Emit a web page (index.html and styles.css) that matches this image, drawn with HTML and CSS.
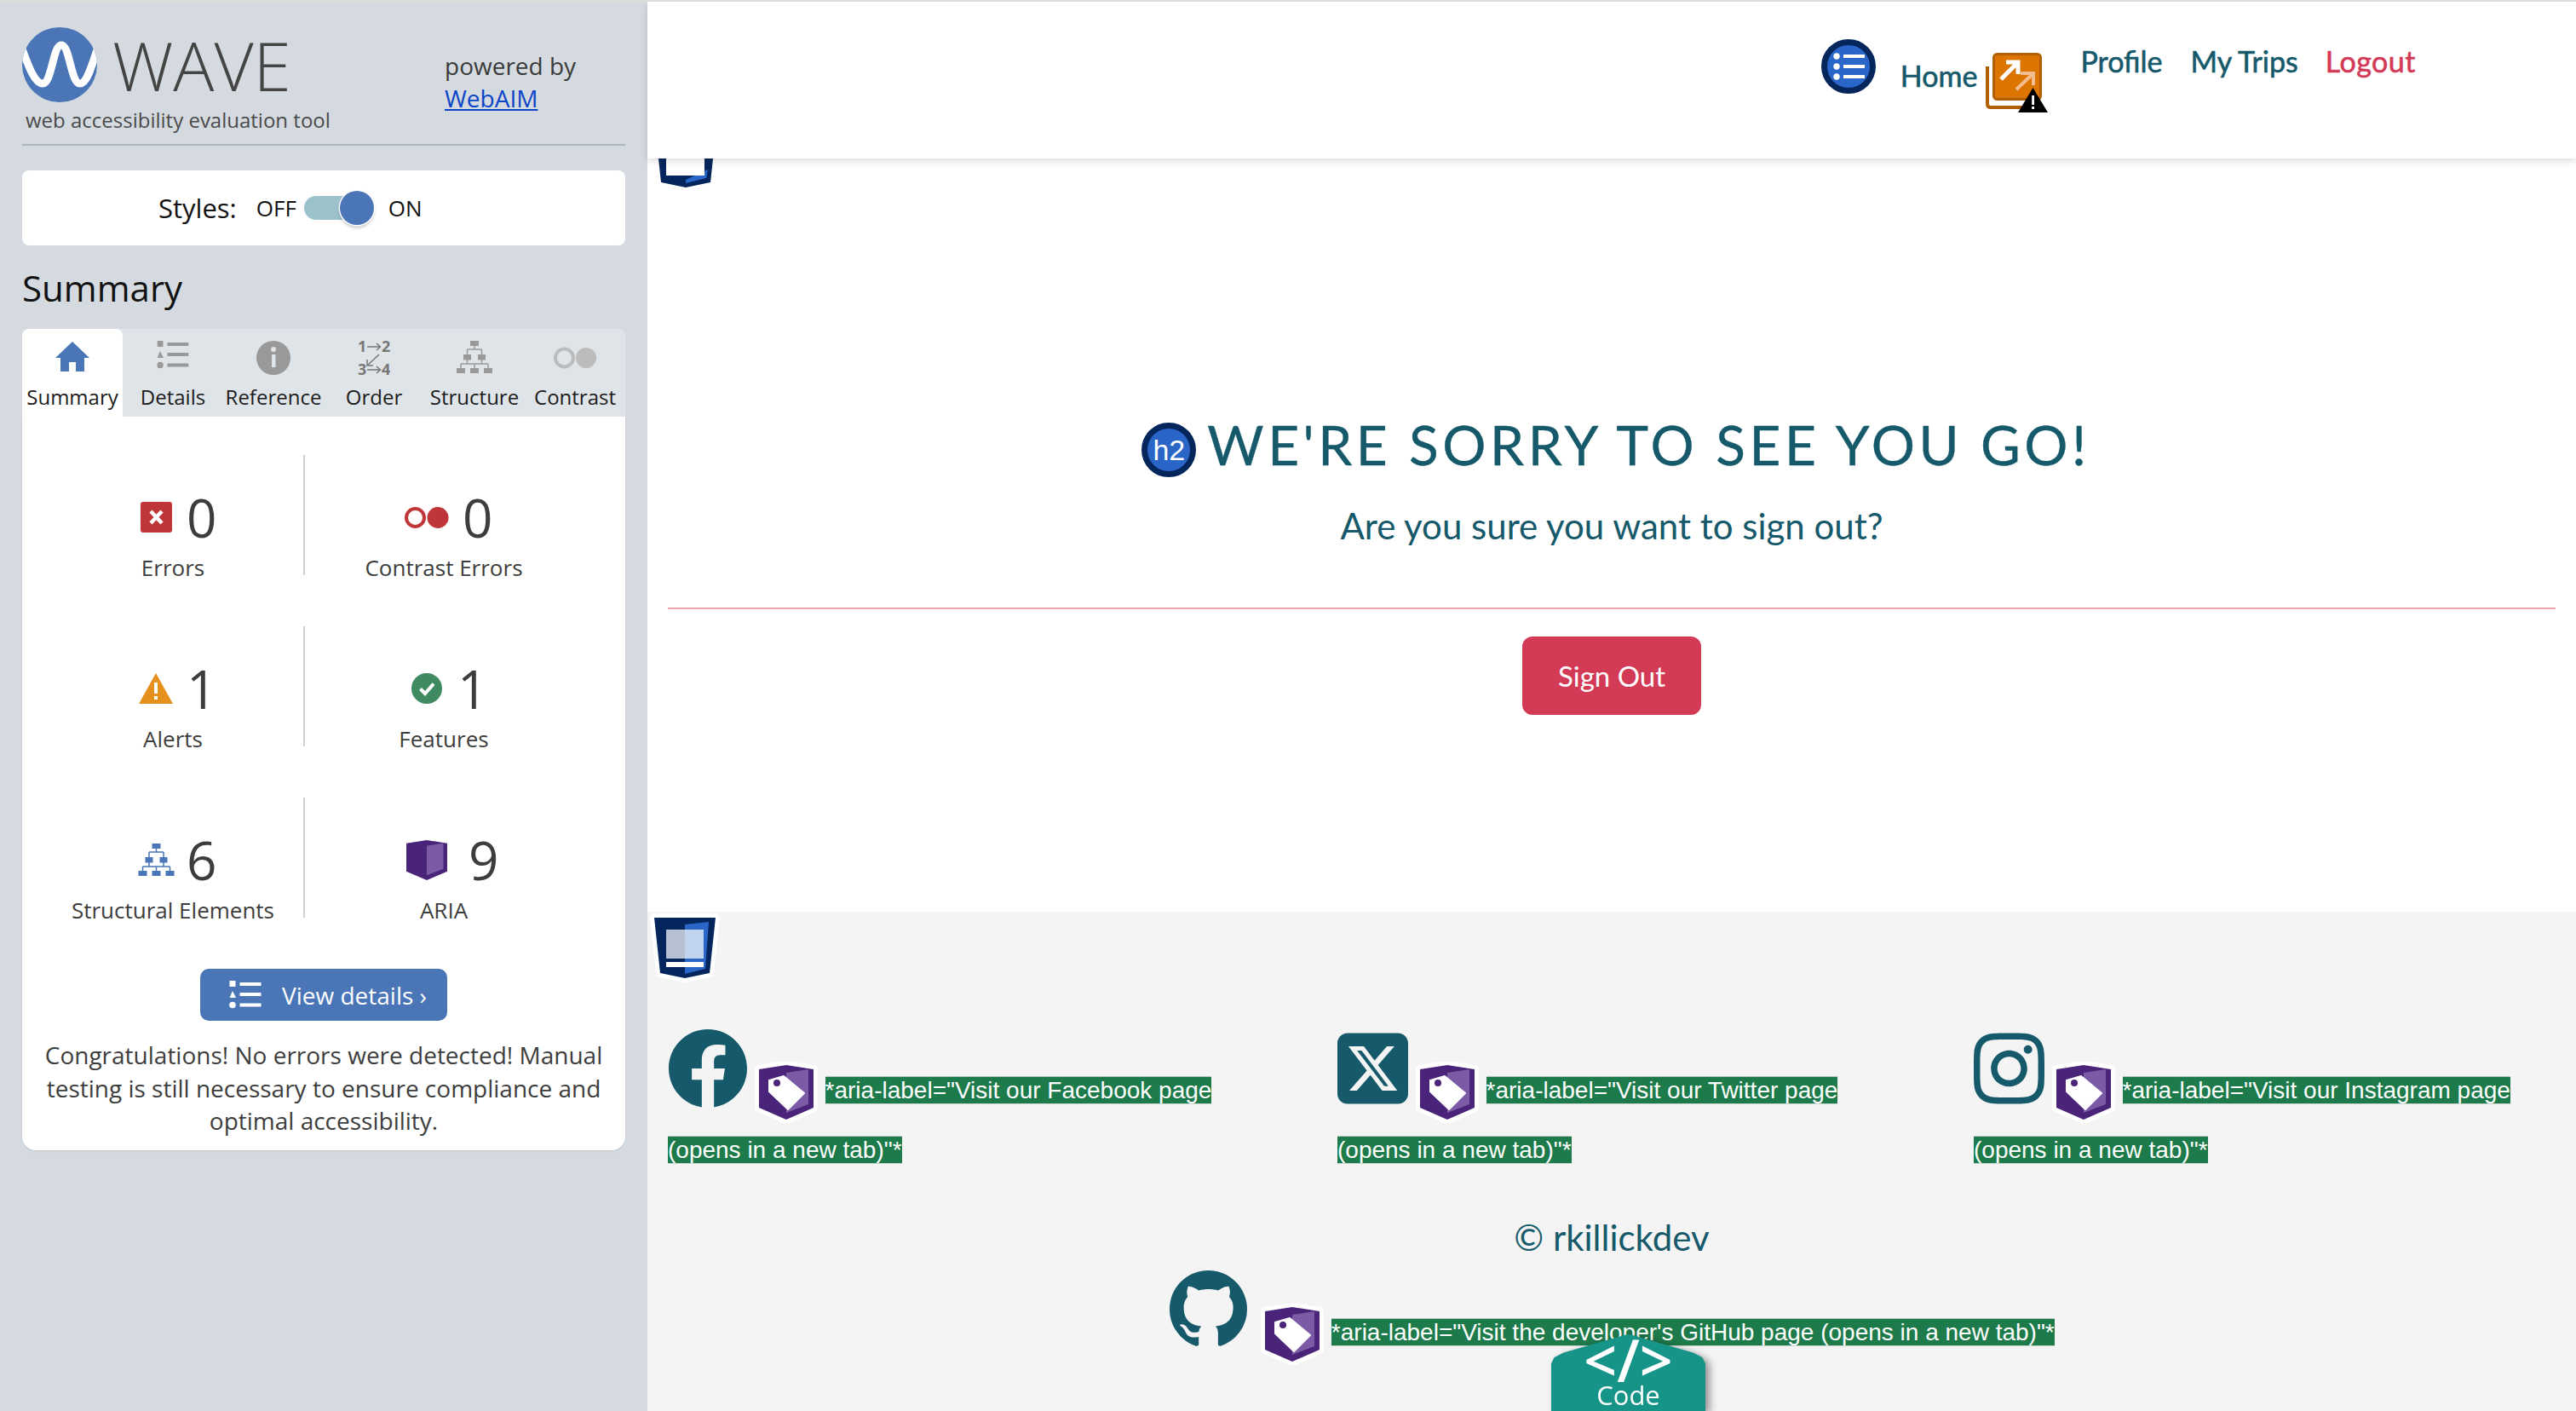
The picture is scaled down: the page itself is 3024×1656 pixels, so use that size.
FILE: index.html
```html
<!DOCTYPE html>
<html lang="en">
<head>
<meta charset="utf-8">
<title>Sign out</title>
<link rel="stylesheet" href="styles.css">
</head>
<body>
<svg class="defs" width="0" height="0" aria-hidden="true">
  <symbol id="s-aria" viewBox="0 0 64 64">
    <polygon points="0,5 32,0 64,5 64,50 32,64 0,50" fill="#4a2478"/>
    <polygon points="32,9 58,5 58,46 32,56" fill="#7b5aa6"/>
  </symbol>
  <symbol id="s-tag" viewBox="-6 -4 76 72">
    <polygon points="0,5 32,0 64,5 64,50 32,64 0,50" fill="#4a2478" stroke="#fff" stroke-width="10" stroke-linejoin="round"/>
    <polygon points="0,5 32,0 64,5 64,50 32,64 0,50" fill="#4a2478"/>
    <polygon points="32,9 58,5 58,46 32,56" fill="#7b5aa6"/>
    <path d="M12 18 L29 13 L53 33 L34 52 L12 31Z" fill="#fff" stroke="#fff" stroke-width="2" stroke-linejoin="round"/>
    <circle cx="21" cy="21" r="4" fill="#4a2478"/>
  </symbol>
  <symbol id="s-tree" viewBox="0 0 42 38">
    <path d="M21 6V10M12.5 10H29.5M12.5 10V16M29.5 10V16M12.5 22V27M29.5 22V27M5 27H37M5 27V32M21 27V32M37 27V32" stroke="currentColor" stroke-width="1.5" fill="none"/>
    <rect x="16" y="0" width="10" height="6" fill="currentColor"/>
    <rect x="8" y="16" width="9" height="6.5" fill="currentColor"/>
    <rect x="25" y="16" width="9" height="6.5" fill="currentColor"/>
    <rect x="0" y="32" width="10" height="6" fill="currentColor"/>
    <rect x="16" y="32" width="10" height="6" fill="currentColor"/>
    <rect x="32" y="32" width="10" height="6" fill="currentColor"/>
  </symbol>
  <symbol id="s-list" viewBox="0 0 37 33">
    <rect x="0" y="0" width="7" height="7" fill="currentColor"/>
    <polygon points="3.5,12 7.5,20 0,20" fill="currentColor"/>
    <circle cx="3.5" cy="28.500" r="3.800" fill="currentColor"/>
    <rect x="12" y="2" width="25" height="4" fill="currentColor"/>
    <rect x="12" y="14" width="25" height="4" fill="currentColor"/>
    <rect x="12" y="26.500" width="25" height="4" fill="currentColor"/>
  </symbol>
</svg>

<aside class="sidebar">
  <header class="brand">
    <div class="brand-main">
      <div class="brand-logo">
        <svg class="logo" viewBox="0 0 88 88" role="img" aria-label="WAVE logo">
          <defs><clipPath id="logo-clip"><circle cx="44" cy="44" r="44"/></clipPath></defs>
          <circle cx="44" cy="44" r="44" fill="#4a76b8"/>
          <path clip-path="url(#logo-clip)" d="M-2 20 C8 48 15 66 24 66 C35 66 36 21 46 21 C56 21 57 66 68 66 C76 66 81 48 90 20" fill="none" stroke="#fff" stroke-width="9"/>
        </svg>
        <span class="wave-word">WAVE</span>
      </div>
      <div class="tagline">web accessibility evaluation tool</div>
    </div>
    <div class="powered">powered by<br><a href="#">WebAIM</a></div>
  </header>

  <div class="styles-card">
    <span class="styles-label">Styles:</span>
    <span class="styles-state">OFF</span>
    <span class="toggle"><span class="knob"></span></span>
    <span class="styles-state">ON</span>
  </div>

  <h1 class="summary-title">Summary</h1>

  <nav class="tabs">
    <div class="tab tab-active">
      <svg class="tab-icon" viewBox="0 0 40 40"><path d="M20 1 L40 20 H34 V36 H24 V25 H16 V36 H6 V20 H0Z" fill="#4a76b8"/></svg>
      <span>Summary</span>
    </div>
    <div class="tab">
      <svg class="tab-icon tab-grey" viewBox="0 0 37 40"><use href="#s-list" x="0" y="0" width="37" height="33"/></svg>
      <span>Details</span>
    </div>
    <div class="tab">
      <svg class="tab-icon" viewBox="0 0 40 40"><circle cx="20" cy="20" r="20" fill="#999"/><circle cx="20" cy="10" r="3" fill="#dfe4e8"/><rect x="18" y="16" width="4.500" height="15" fill="#dfe4e8"/></svg>
      <span>Reference</span>
    </div>
    <div class="tab">
      <svg class="tab-order" viewBox="0 -6 38 52">
        <text x="0" y="13" class="order-digit">1</text><text x="28" y="13" class="order-digit">2</text>
        <text x="0" y="40" class="order-digit">3</text><text x="28" y="40" class="order-digit">4</text>
        <path d="M11 7H26M22 3L26.500 7L22 11M11 34H26M22 30L26.500 34L22 38M25 16L11 29M11 22V29H18" fill="none" stroke="#777" stroke-width="1.500"/>
      </svg>
      <span>Order</span>
    </div>
    <div class="tab">
      <svg class="tab-icon tab-grey" viewBox="0 0 42 40"><use href="#s-tree" x="0" y="0" width="42" height="38"/></svg>
      <span>Structure</span>
    </div>
    <div class="tab">
      <svg class="tab-icon tab-contrast" viewBox="0 0 50 26"><circle cx="12.500" cy="13" r="10.500" fill="none" stroke="#bcbcbc" stroke-width="4"/><circle cx="38" cy="13" r="12" fill="#bcbcbc"/></svg>
      <span>Contrast</span>
    </div>
  </nav>

  <section class="panel">
    <div class="stats">
      <div class="stat stat-left">
        <div class="stat-row">
          <span class="stat-icon"><svg width="37" height="36" viewBox="0 0 37 36"><rect width="37" height="36" rx="3" fill="#c03538"/><path d="M12 11L25 25M25 11L12 25" stroke="#fff" stroke-width="4.500"/></svg></span>
          <span class="stat-num">0</span>
        </div>
        <div class="stat-label">Errors</div>
      </div>
      <div class="stat stat-right">
        <div class="stat-row">
          <span class="stat-icon"><svg width="52" height="25" viewBox="0 0 52 25"><circle cx="12.500" cy="12.500" r="10.500" fill="none" stroke="#c03538" stroke-width="4"/><circle cx="39" cy="12.500" r="12.500" fill="#c03538"/></svg></span>
          <span class="stat-num">0</span>
        </div>
        <div class="stat-label">Contrast Errors</div>
      </div>
      <div class="stat stat-left">
        <div class="stat-row">
          <span class="stat-icon"><svg width="40" height="36" viewBox="0 0 40 36"><polygon points="20,0 40,36 0,36" fill="#e5901c"/><rect x="18" y="11" width="4" height="13" fill="#fff"/><rect x="18" y="27" width="4" height="4" fill="#fff"/></svg></span>
          <span class="stat-num">1</span>
        </div>
        <div class="stat-label">Alerts</div>
      </div>
      <div class="stat stat-right">
        <div class="stat-row stat-row-tight">
          <span class="stat-icon"><svg width="36" height="36" viewBox="0 0 36 36"><circle cx="18" cy="18" r="18" fill="#3f8a60"/><path d="M10.500 18.500L16 24L26 12.500" fill="none" stroke="#fff" stroke-width="4"/></svg></span>
          <span class="stat-num">1</span>
        </div>
        <div class="stat-label">Features</div>
      </div>
      <div class="stat stat-left">
        <div class="stat-row">
          <span class="stat-icon stat-tree"><svg width="43" height="38"><use href="#s-tree"/></svg></span>
          <span class="stat-num">6</span>
        </div>
        <div class="stat-label">Structural Elements</div>
      </div>
      <div class="stat stat-right">
        <div class="stat-row stat-row-wide">
          <span class="stat-icon"><svg width="48" height="47" viewBox="0 0 64 64" preserveAspectRatio="none"><use href="#s-aria"/></svg></span>
          <span class="stat-num">9</span>
        </div>
        <div class="stat-label">ARIA</div>
      </div>
    </div>

    <button class="details-btn" type="button">
      <svg class="details-icon" width="38" height="33"><use href="#s-list"/></svg>
      <span>View details ›</span>
    </button>

    <p class="congrats">Congratulations! No errors were detected! Manual testing is still necessary to ensure compliance and optimal accessibility.</p>
  </section>
</aside>

<main class="page">
  <header class="topbar">
    <nav class="nav">
      <svg class="ico-listcircle" width="64" height="64" viewBox="0 0 64 64">
        <circle cx="32" cy="32" r="28.500" fill="#2a66c8" stroke="#05265c" stroke-width="7"/>
        <circle cx="18" cy="20" r="3.700" fill="#fff"/><circle cx="18" cy="32" r="3.700" fill="#fff"/><circle cx="18" cy="44" r="3.700" fill="#fff"/>
        <rect x="26" y="18" width="25" height="4" fill="#fff"/><rect x="26" y="30" width="25" height="4" fill="#fff"/><rect x="26" y="42" width="25" height="4" fill="#fff"/>
      </svg>
      <a class="nav-link nav-home" href="#">Home</a>
      <svg class="ico-external" width="73" height="70" viewBox="0 0 73 70">
        <path d="M2 16V60Q2 64 6 64H45" fill="none" stroke="#b06000" stroke-width="4"/>
        <rect x="9.500" y="1.500" width="55" height="53" rx="4" fill="#dc7400" stroke="#b06000" stroke-width="3"/>
        <path d="M18 31L36 13M24 11H38V25" fill="none" stroke="#fff" stroke-width="5"/>
        <path d="M36 43L54 26M41 24H56V38" fill="none" stroke="#f5bd8f" stroke-width="4"/>
        <polygon points="38,70 55.500,41 73,70" fill="#000"/>
        <rect x="54.200" y="50" width="2.800" height="11" fill="#fff"/><rect x="54.200" y="63" width="2.800" height="3" fill="#fff"/>
      </svg>
      <a class="nav-link nav-profile" href="#">Profile</a>
      <a class="nav-link nav-trips" href="#">My Trips</a>
      <a class="nav-link nav-logout" href="#">Logout</a>
    </nav>
  </header>
  <svg class="ico-nav-landmark" width="72" height="71" viewBox="0 0 72 71">
    <polygon points="0,0 72,0 65,65 36,71 7,65" fill="#05265c"/>
    <polygon points="36,62 62,50 60,60 36,66" fill="#2a66c8"/>
    <rect x="13" y="0" width="45" height="57" fill="#fff"/>
  </svg>

  <section class="content">
    <h2 class="headline">
      <span class="h2-badge">h2</span>
      <span class="headline-text">WE'RE SORRY TO SEE YOU GO!</span>
    </h2>
    <p class="lead">Are you sure you want to sign out?</p>
    <hr class="rule">
    <div class="actions"><button class="signout" type="button">Sign Out</button></div>
  </section>

  <footer class="footer">
    <svg class="ico-landmark" width="86" height="83" viewBox="-7 -5 86 83">
      <polygon points="0,0 72,0 65,65 36,71 7,65" fill="#05265c" stroke="#fff" stroke-width="10" stroke-linejoin="round"/>
      <polygon points="0,0 72,0 65,65 36,71 7,65" fill="#05265c"/>
      <polygon points="36,8 64,5 60,60 36,66" fill="#2a66c8"/>
      <rect x="14" y="14" width="22" height="34" fill="#b5c0d0"/>
      <rect x="36" y="14" width="22" height="34" fill="#c0d4f0"/>
      <rect x="14" y="52" width="44" height="6" fill="#fff"/>
    </svg>
    <div class="socials">
      <div class="social">
        <svg class="soc soc-fb" viewBox="8 8 496 496"><path d="M504 256C504 119 393 8 256 8S8 119 8 256c0 123.780 90.690 226.380 209.250 245V327.690h-63V256h63v-54.640c0-62.150 37-96.480 93.670-96.480 27.140 0 55.520 4.840 55.520 4.840v61h-31.280c-30.800 0-40.410 19.120-40.410 38.730V256h68.780l-11 71.690h-57.780V501C413.310 482.380 504 379.780 504 256z"/></svg>
        <svg class="tag" width="76" height="72"><use href="#s-tag"/></svg>
        <span class="aria-note">*aria-label="Visit our Facebook page (opens in a new tab)"*</span>
      </div>
      <div class="social">
        <svg class="soc soc-sq" viewBox="0 32 448 448"><path d="M64 32C28.700 32 0 60.700 0 96V416c0 35.300 28.700 64 64 64H384c35.300 0 64-28.700 64-64V96c0-35.300-28.700-64-64-64H64zm297.100 84L257.300 234.600 379.400 396H283.800L209 298.100 123.300 396H75.800l111-126.900L69.700 116h98l67.700 89.500L313.600 116h47.500zM323.300 367.600L153.400 142.900H125.100L296.900 367.600h26.300z"/></svg>
        <svg class="tag" width="76" height="72"><use href="#s-tag"/></svg>
        <span class="aria-note">*aria-label="Visit our Twitter page (opens in a new tab)"*</span>
      </div>
      <div class="social">
        <svg class="soc soc-sq" viewBox="0 31 448 450"><path d="M224.100 141c-63.600 0-114.900 51.300-114.900 114.900s51.300 114.900 114.900 114.900S339 319.500 339 255.900 287.700 141 224.100 141zm0 189.600c-41.100 0-74.700-33.500-74.700-74.700s33.500-74.700 74.700-74.700 74.700 33.500 74.700 74.700-33.600 74.700-74.700 74.700zm146.400-194.300c0 14.900-12 26.800-26.800 26.800-14.900 0-26.800-12-26.800-26.800s12-26.800 26.800-26.800 26.800 12 26.800 26.800zm76.100 27.200c-1.700-35.900-9.900-67.700-36.200-93.900-26.200-26.200-58-34.400-93.900-36.200-37-2.100-147.900-2.100-184.900 0-35.800 1.700-67.600 9.900-93.900 36.100s-34.400 58-36.200 93.900c-2.100 37-2.100 147.900 0 184.900 1.700 35.900 9.900 67.700 36.200 93.900s58 34.400 93.900 36.200c37 2.100 147.900 2.100 184.900 0 35.900-1.700 67.700-9.900 93.900-36.200 26.200-26.200 34.400-58 36.200-93.900 2.100-37 2.100-147.800 0-184.800zM398.800 388c-7.800 19.600-22.900 34.700-42.600 42.600-29.500 11.700-99.500 9-132.100 9s-102.700 2.600-132.100-9c-19.600-7.800-34.700-22.900-42.600-42.600-11.700-29.500-9-99.500-9-132.100s-2.600-102.700 9-132.100c7.800-19.600 22.900-34.700 42.600-42.600 29.500-11.700 99.500-9 132.100-9s102.700-2.600 132.100 9c19.600 7.800 34.700 22.900 42.600 42.600 11.700 29.500 9 99.500 9 132.100s2.700 102.700-9 132.100z"/></svg>
        <svg class="tag" width="76" height="72"><use href="#s-tag"/></svg>
        <span class="aria-note">*aria-label="Visit our Instagram page (opens in a new tab)"*</span>
      </div>
    </div>
    <p class="copyright">© rkillickdev</p>
    <div class="github">
      <svg class="soc soc-gh" viewBox="0 0 16 16"><path d="M8 0C3.580 0 0 3.580 0 8c0 3.540 2.290 6.530 5.470 7.590.4.070.55-.17.55-.38 0-.19-.01-.82-.01-1.490-2.010.37-2.530-.49-2.690-.94-.09-.23-.48-.94-.82-1.130-.28-.15-.68-.52-.01-.53.63-.01 1.080.58 1.230.82.720 1.210 1.870.87 2.330.66.070-.52.280-.87.510-1.070-1.780-.2-3.640-.89-3.640-3.950 0-.87.310-1.590.820-2.150-.08-.2-.36-1.020.080-2.120 0 0 .67-.21 2.200.82.640-.18 1.320-.27 2-.27.680 0 1.360.090 2 .27 1.530-1.040 2.200-.82 2.200-.82.440 1.100.160 1.920.080 2.120.510.560.820 1.270.820 2.150 0 3.070-1.870 3.750-3.650 3.950.29.25.54.730.54 1.480 0 1.070-.01 1.930-.01 2.200 0 .21.150.46.55.38A8.013 8.013 0 0016 8c0-4.420-3.580-8-8-8z"/></svg>
      <svg class="tag" width="76" height="72"><use href="#s-tag"/></svg>
      <span class="aria-note">*aria-label="Visit the developer's GitHub page (opens in a new tab)"*</span>
    </div>
  </footer>
</main>

<div class="code-wrap"><div class="code-tab"><span class="code-glyph">&lt;/&gt;</span><span class="code-word">Code</span></div></div>
</body>
</html>
```
FILE: styles.css
```css
* { box-sizing: border-box; }
html, body { margin: 0; padding: 0; }
body {
  width: 3024px;
  height: 1656px;
  overflow: hidden;
  display: flex;
  border-top: 2px solid #dcdcdc;
  background: #fff;
  font-family: "Open Sans", sans-serif;
  color: #3d3d3d;
}
.defs { position: absolute; }

/* Sidebar */
.sidebar {
  width: 760px;
  flex: none;
  background: #d4dadf;
  padding: 0 26px;
}
.brand {
  height: 169px;
  display: flex;
  padding-top: 30px;
  border-bottom: 2px solid #aeb5bb;
}
.brand-main { width: 496px; flex: none; }
.brand-logo { display: flex; align-items: center; gap: 18px; height: 88px; }
.logo { width: 88px; height: 88px; flex: none; }
.wave-word {
  font-size: 80px;
  font-weight: 300;
  line-height: 88px;
  color: #444;
}
.tagline { font-size: 24px; line-height: 32px; margin: 5px 0 0 4px; color: #4a4a4a; }
.powered { font-size: 28px; line-height: 38px; padding-top: 26px; color: #3a3a3a; }
.powered a { color: #0b45c8; }

.styles-card {
  margin-top: 29px;
  height: 88px;
  background: #fff;
  border-radius: 8px;
  display: flex;
  align-items: center;
  padding-left: 160px;
  color: #111;
}
.styles-label { font-size: 31px; margin-right: 23px; }
.styles-state { font-size: 26px; }
.toggle {
  position: relative;
  width: 58px;
  height: 28px;
  margin: 0 41px 0 9px;
  border-radius: 14px;
  background: #9bc1cb;
}
.knob {
  position: absolute;
  right: -24px;
  top: -6px;
  width: 40px;
  height: 40px;
  border-radius: 50%;
  background: #4a76b8;
  box-shadow: 0 0 0 1.5px #fff, 0 3px 4px rgba(0,0,0,.25);
}

.summary-title {
  margin: 20px 0 18px;
  font-size: 42px;
  font-weight: 400;
  line-height: 60px;
  color: #111;
}

.tabs {
  display: flex;
  height: 103px;
  background: #dfe4e8;
  border-radius: 8px 8px 0 0;
}
.tab {
  width: 118px;
  flex: none;
  display: flex;
  flex-direction: column;
  align-items: center;
  font-size: 24px;
  line-height: 30px;
  color: #1c1c1c;
  white-space: nowrap;
}
.tab-active { background: #fff; border-radius: 8px 8px 0 0; }
.tab-icon { height: 40px; width: 44px; margin: 14px 0 11px; }
.tab-order { height: 52px; width: 38px; margin: 8px 0 5px; }
.tab-grey { color: #999; }
.tab-contrast { width: 50px; }
.order-digit { font-family: "Open Sans", sans-serif; font-weight: 700; font-size: 18px; fill: #777; }

.panel {
  height: 861px;
  background: #fff;
  border-radius: 0 0 16px 16px;
  box-shadow: 0 1px 2px rgba(0,0,0,.1);
  padding-top: 45px;
}
.stats {
  display: grid;
  grid-template-columns: 312px 326px;
  grid-auto-rows: 141px;
  row-gap: 60px;
  margin-left: 20px;
}
.stat { padding-top: 38px; }
.stat-left { border-right: 2px solid #d0d0d0; }
.stat-row { display: flex; align-items: center; height: 70px; }
.stat-left .stat-row { padding-left: 109px; gap: 8px; }
.stat-right .stat-row { padding-left: 115px; gap: 14px; }
.stat-right .stat-row-wide { gap: 21px; }
.stat-right .stat-row-tight { gap: 8px; }
.stat-icon { width: 56px; flex: none; display: flex; justify-content: center; }
.stat-tree { color: #4a76b8; }
.stat-num { font-size: 62px; font-weight: 400; line-height: 70px; color: #3d3d3d; }
.stat-label { margin-top: 14px; font-size: 26px; line-height: 20px; text-align: center; color: #3d3d3d; white-space: nowrap; }
.stat-left .stat-label { padding-left: 4px; }

.details-btn {
  display: flex;
  align-items: center;
  gap: 24px;
  width: 290px;
  height: 61px;
  margin: 60px auto 0;
  padding: 0 0 0 34px;
  border: 0;
  border-radius: 10px;
  background: #4a76b8;
  color: #fff;
  font-family: inherit;
  font-size: 28px;
}
.details-icon { color: #fff; flex: none; }
.congrats {
  margin: 21px 0 0;
  padding: 0 18px;
  font-size: 28px;
  line-height: 38.500px;
  text-align: center;
  color: #3d3d3d;
}

/* Main */
.page { position: relative; flex: 1; display: flex; flex-direction: column; font-family: Lato, sans-serif; color: #15596b; }
.topbar {
  position: relative;
  z-index: 2;
  height: 184px;
  background: #fff;
  box-shadow: 0 3px 8px rgba(0,0,0,.14);
}
.nav { display: flex; align-items: flex-start; justify-content: flex-end; padding-right: 188px; }
.ico-listcircle { flex: none; margin-top: 44px; }
.nav-link { font-size: 34px; font-weight: 400; -webkit-text-stroke: .6px currentColor; line-height: 44px; color: #15596b; text-decoration: none; white-space: nowrap; }
.nav-home { margin: 65px 10px 0 29px; }
.ico-external { flex: none; margin-top: 60px; }
.nav-profile { margin: 48px 0 0 38px; }
.nav-trips { margin: 48px 0 0 33px; }
.nav-logout { margin: 48px 0 0 32px; color: #d33a56; letter-spacing: .5px; }
.ico-nav-landmark { position: absolute; left: 9px; top: 147px; z-index: 1; }

.content { height: 884px; padding: 304px 24px 0; }
.headline {
  margin: 0;
  display: flex;
  align-items: center;
  justify-content: center;
  gap: 13px;
  padding-left: 10px;
  font-weight: 400;
}
.h2-badge {
  width: 64px;
  height: 64px;
  flex: none;
  display: flex;
  align-items: center;
  justify-content: center;
  border-radius: 50%;
  border: 7px solid #05265c;
  background: #2a66c8;
  color: #fff;
  font-family: "Liberation Sans", sans-serif;
  font-size: 34px;
}
.headline-text { font-size: 64px; line-height: 64px; letter-spacing: 4.500px; padding-bottom: 12px; white-space: nowrap; -webkit-text-stroke: .4px currentColor; }
.lead { margin: 23px 0 0; font-size: 42px; line-height: 56px; text-align: center; }
.rule { margin: 68px 0 0; border: 0; height: 2px; background: #eda3ad; }
.actions { margin-top: 32px; display: flex; justify-content: center; }
.signout {
  width: 210px;
  height: 92px;
  border: 0;
  border-radius: 12px;
  background: #d33a56;
  color: #fff;
  font-family: inherit;
  font-size: 33px;
}

.footer { height: 586px; background: #f4f4f4; padding: 2px 24px 0; overflow: hidden; }
.ico-landmark { display: block; margin-left: -23px; }
.socials {
  display: grid;
  grid-template-columns: 786px 747px 1fr;
  align-items: baseline;
  margin-top: 52px;
}
.social, .github { font-family: "Liberation Sans", sans-serif; font-size: 28px; line-height: 64px; }
.social { max-width: 650px; }
.soc { fill: #15596b; }
.soc-fb { width: 92px; height: 94px; margin-left: 1px; vertical-align: -12px; }
.soc-sq { width: 83px; height: 84px; vertical-align: -7px; }
.soc-gh { width: 93px; height: 91px; margin-right: 6px; vertical-align: -9px; }
.tag { vertical-align: -29px; }
.aria-note {
  background: #1d7a4a;
  color: #fff;
  border-top: 1px solid #b5c8bb;
  border-bottom: 1px solid #c8d4cc;
}
.copyright { margin: 40px 0 0; font-size: 42px; line-height: 60px; text-align: center; font-weight: 400; }
.github { margin-top: 9px; text-align: center; white-space: nowrap; }

.code-wrap {
  position: fixed;
  left: 1821px;
  bottom: 0;
  width: 181px;
  height: 90px;
  filter: drop-shadow(5px 3px 5px rgba(0,0,0,.4));
  z-index: 5;
}
.code-tab {
  height: 100%;
  background: #179488;
  clip-path: polygon(47% 1.500%, 50% 0, 53% 1.500%, 92% 24%, 98% 30%, 100% 38%, 100% 100%, 0 100%, 0 38%, 2% 30%, 8% 24%);
  display: flex;
  flex-direction: column;
  align-items: center;
  color: #fff;
  font-family: "Open Sans", sans-serif;
}
.code-glyph { font-size: 68px; font-weight: 600; line-height: 60px; height: 54px; }
.code-word { font-size: 31px; line-height: 34px; }
```
